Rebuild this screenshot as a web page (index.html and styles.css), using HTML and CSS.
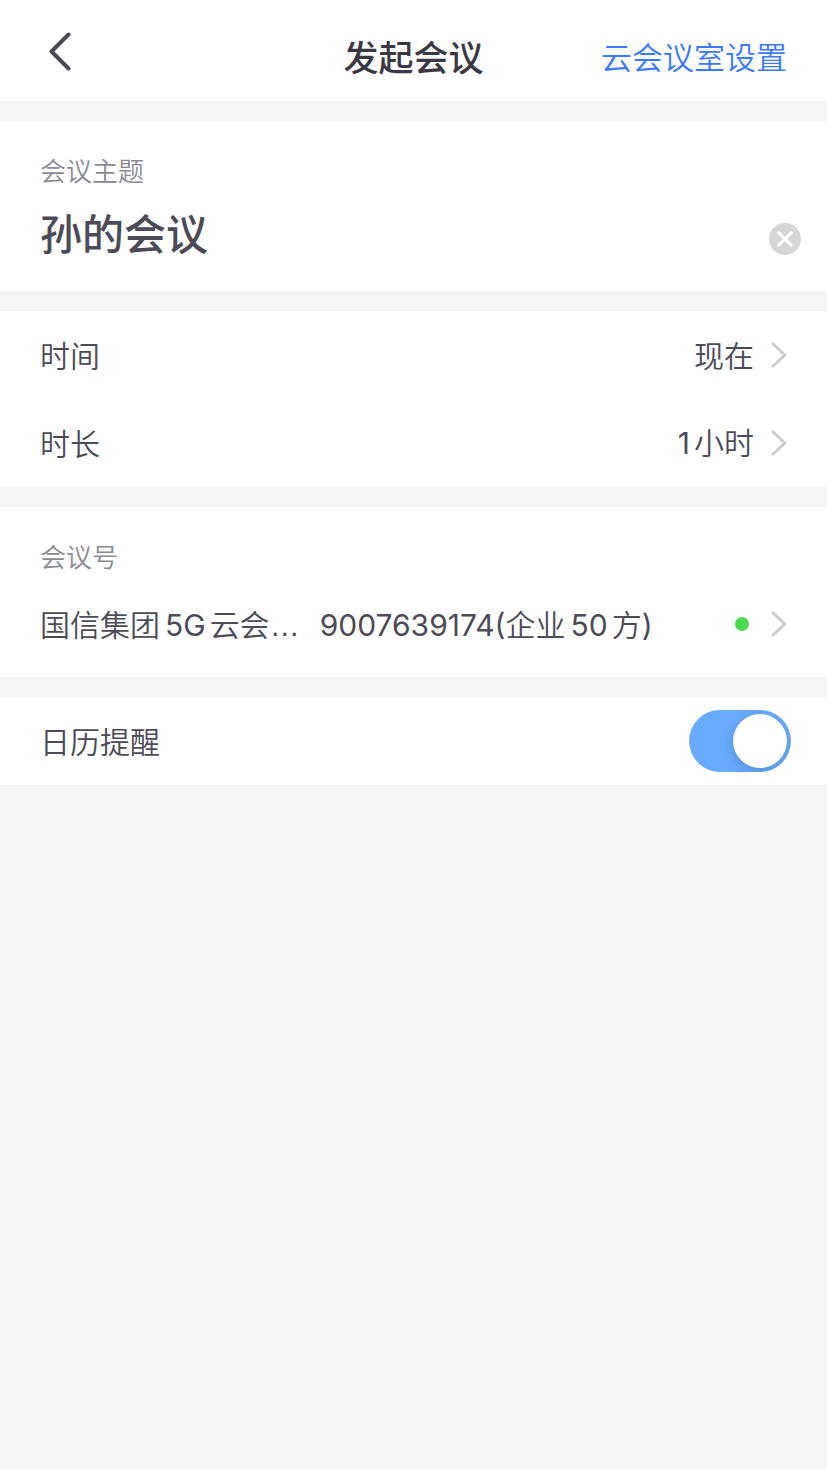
FILE: index.html
```
<!DOCTYPE html>
<html lang="zh-CN">
<head>
<meta charset="utf-8">
<meta name="viewport" content="width=device-width, initial-scale=1">
<title>发起会议</title>
<link rel="stylesheet" href="styles.css">
</head>
<body>
<header class="navbar">
  <button class="back" type="button" aria-label="返回">
    <svg class="back-icon" viewBox="0 0 24 40" aria-hidden="true"><path d="M20.5 3.5 3.5 20.5 20.5 37.5"/></svg>
  </button>
  <h1 class="title">发起会议</h1>
  <a class="settings" href="#">云会议室设置</a>
</header>
<main class="form">
  <section class="card topic">
    <label class="caption" for="topic">会议主题</label>
    <div class="topic-field">
      <input class="topic-input" id="topic" type="text" value="孙的会议">
      <button class="clear" type="button" aria-label="清除">
        <svg class="clear-icon" viewBox="0 0 32 32" aria-hidden="true"><circle cx="16" cy="16" r="16"/><path d="m9.700 9.700 12.600 12.600M22.300 9.700 9.700 22.300"/></svg>
      </button>
    </div>
  </section>
  <section class="card">
    <button class="row" type="button">
      <span class="name">时间</span>
      <span class="value">现在</span>
      <svg class="arrow" viewBox="0 0 16 26" aria-hidden="true"><path d="m2 2 12 11L2 24"/></svg>
    </button>
    <button class="row" type="button">
      <span class="name">时长</span>
      <span class="value"><span class="latin gap-after">1</span>小时</span>
      <svg class="arrow" viewBox="0 0 16 26" aria-hidden="true"><path d="m2 2 12 11L2 24"/></svg>
    </button>
  </section>
  <section class="card number">
    <h2 class="caption">会议号</h2>
    <button class="row room" type="button">
      <span class="room-name">国信集团<span class="latin gap-before gap-after">5G</span>云会<span class="ellipsis">…</span></span>
      <span class="room-number"><span class="latin">9007639174(</span>企业<span class="latin gap-before gap-after">50</span>方<span class="latin">)</span></span>
      <span class="status"></span>
      <svg class="arrow" viewBox="0 0 16 26" aria-hidden="true"><path d="m2 2 12 11L2 24"/></svg>
    </button>
  </section>
  <section class="card">
    <div class="row">
      <label class="name" for="reminder">日历提醒</label>
      <input class="switch" id="reminder" type="checkbox" role="switch" checked>
    </div>
  </section>
</main>
</body>
</html>
```
FILE: styles.css
```
* {
  box-sizing: border-box;
}

body {
  margin: 0;
  background: #f4f6f5;
  color: #4c4b57;
  font-family: "Noto Sans CJK SC", Inter, sans-serif;
  font-size: 30px;
  font-weight: 350;
  line-height: 44px;
}

button,
input {
  margin: 0;
  padding: 0;
  border: 0;
  background: none;
  color: inherit;
  font: inherit;
}

button {
  cursor: pointer;
}

svg {
  display: block;
  fill: none;
  stroke-linecap: round;
  stroke-linejoin: round;
}

.navbar {
  display: grid;
  grid-template-columns: 1fr auto 1fr;
  align-items: center;
  padding: 10px 40px 0;
  height: 101px;
  background: #fff;
}

.back {
  justify-self: start;
  padding: 0 8px 10px;
}

.back-icon {
  width: 24px;
  height: 40px;
  stroke: #4c4b57;
  stroke-width: 4;
}

.title {
  margin: 0;
  color: #3a3943;
  font-size: 35px;
  font-weight: 500;
}

.settings {
  justify-self: end;
  color: #3b7afa;
  font-size: 31px;
  text-decoration: none;
}

.form {
  display: flex;
  flex-direction: column;
  gap: 20px;
  padding: 20px 0;
}

.card {
  background: #fff;
}

.caption {
  display: block;
  margin: 0;
  color: #8b8a93;
  font-size: 26px;
  font-weight: inherit;
  line-height: 40px;
}

.topic {
  padding: 29px 26px 15px 40px;
}

.topic-field {
  display: flex;
  align-items: center;
  gap: 20px;
  padding-top: 12px;
}

.topic-input {
  flex: 1;
  min-width: 0;
  height: 74px;
  padding-bottom: 16px;
  outline: 0;
  font-size: 42px;
  font-weight: 500;
}

.clear-icon {
  width: 32px;
  height: 32px;
  fill: #d6d6d6;
}

.clear-icon path {
  stroke: #fff;
  stroke-width: 3;
}

.row {
  display: flex;
  align-items: center;
  width: 100%;
  height: 88px;
  padding: 0 40px;
  text-align: left;
}

.name {
  flex: 1;
}

.name,
.value {
  padding-bottom: 2px;
}

.arrow {
  width: 16px;
  height: 26px;
  margin-left: 17px;
  stroke: #ccc;
  stroke-width: 3;
}

.latin {
  font-family: Inter, sans-serif;
  font-weight: 400;
}

.ellipsis {
  font-family: "Liberation Sans", sans-serif;
}

.gap-before {
  margin-left: 5px;
}

.gap-after {
  margin-right: 4px;
}

.number {
  padding: 29px 0 5px;
}

.number .caption {
  padding: 0 40px;
}

.room {
  height: 96px;
  white-space: nowrap;
}

.room-number {
  flex: 1;
  margin-left: 20px;
}

.status {
  width: 14px;
  height: 14px;
  margin-right: 5px;
  border-radius: 50%;
  background: #4fd94f;
}

.switch {
  appearance: none;
  display: flex;
  justify-content: flex-end;
  width: 102px;
  height: 62px;
  margin-right: -4px;
  padding: 4px;
  overflow: hidden;
  border-radius: 31px;
  background: #69acff;
  cursor: pointer;
}

.switch::before {
  content: "";
  width: 54px;
  height: 54px;
  border-radius: 50%;
  background: #fff;
  box-shadow: 0 4px 14px rgba(0, 0, 0, 0.18);
}

.switch:not(:checked) {
  justify-content: flex-start;
  background: #d6d6d6;
}
```
